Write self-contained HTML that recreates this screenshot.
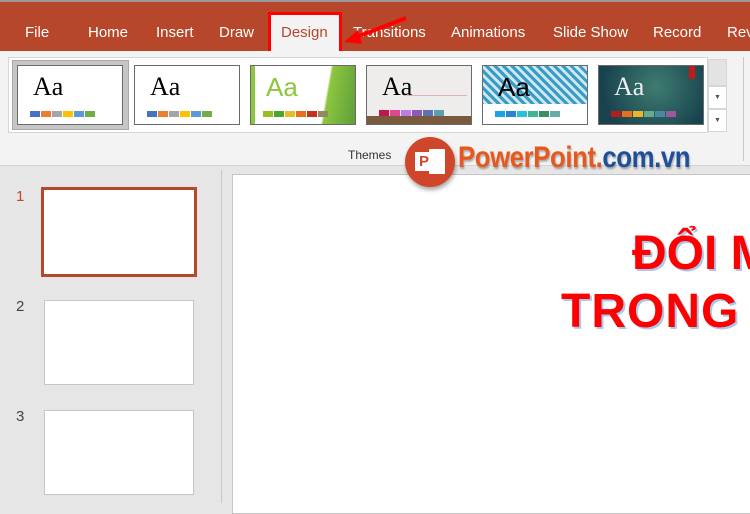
<!DOCTYPE html>
<html><head><meta charset="utf-8"><style>
*{margin:0;padding:0;box-sizing:border-box}
body{width:750px;height:503px;overflow:hidden;position:relative;background:#e6e6e6;font-family:"Liberation Sans",sans-serif}
.top{position:absolute;left:0;top:0;width:750px;height:51px;background:#b7472a;border-top:2px solid #9a9a9a}
.tab{position:absolute;top:24px;color:#fff;font-size:15px}
.rib{position:absolute;left:0;top:51px;width:750px;height:115px;background:#f3f3f3;border-bottom:1px solid #d4d4d4}
.gal{position:absolute;left:8px;top:57px;width:700px;height:76px;background:#fff;border:1px solid #d6d6d6}
.th{position:absolute;top:65px;width:106px;height:60px;border:1px solid #6a6a6a;background:#fff;overflow:hidden}
.th .aa{position:absolute;left:15px;top:6px;font-family:"Liberation Serif",serif;font-size:26px;color:#000}
.th .c{position:absolute;left:12px;top:45px;display:flex;gap:1px}
.th .c i{display:block;width:10px;height:6px}
.sb{position:absolute;left:708px;width:19px;background:#fff;border:1px solid #d6d6d6}
</style></head><body>
<div class="top"></div>
<div class="tab" style="left:25px;top:24px">File</div>
<div class="tab" style="left:88px">Home</div>
<div class="tab" style="left:156px">Insert</div>
<div class="tab" style="left:219px">Draw</div>
<div style="position:absolute;left:268px;top:12px;width:74px;height:43px;background:#f3f3f3;border:3px solid #f00"></div>
<div class="tab" style="left:281px;color:#b7472a">Design</div>
<div class="tab" style="left:353px">Transitions</div>
<div class="tab" style="left:451px">Animations</div>
<div class="tab" style="left:553px">Slide Show</div>
<div class="tab" style="left:653px">Record</div>
<div class="tab" style="left:727px">Rev</div>
<svg style="position:absolute;left:340px;top:12px" width="70" height="40"><line x1="66" y1="6" x2="14" y2="26" stroke="#f00" stroke-width="4"/><polygon points="4,30 18,18 22,32" fill="#f00"/></svg>
<div class="rib"></div>
<div class="gal"></div>
<div style="position:absolute;left:12px;top:60px;width:117px;height:70px;background:#c6c6c6;border:1px solid #a8a8a8"></div>
<div class="th" style="left:17px;width:106px"><span class="aa">Aa</span><div class="c"><i style="background:#4472c4"></i><i style="background:#ed7d31"></i><i style="background:#a5a5a5"></i><i style="background:#ffc000"></i><i style="background:#5b9bd5"></i><i style="background:#70ad47"></i></div></div>
<div class="th" style="left:134px"><span class="aa">Aa</span><div class="c"><i style="background:#4472c4"></i><i style="background:#ed7d31"></i><i style="background:#a5a5a5"></i><i style="background:#ffc000"></i><i style="background:#5b9bd5"></i><i style="background:#70ad47"></i></div></div>
<div class="th" style="left:250px;background:linear-gradient(100deg,#fff 70%,#8dc63f 72%,#5f9e3a 100%)"><div style="position:absolute;left:0;top:0;width:4px;height:60px;background:#8dc63f"></div><span class="aa" style="font-family:'Liberation Sans';color:#8dc63f">Aa</span><div class="c"><i style="background:#94c11f"></i><i style="background:#4ea72a"></i><i style="background:#e8bc28"></i><i style="background:#e86d1c"></i><i style="background:#c7301f"></i><i style="background:#958860"></i></div></div>
<div class="th" style="left:366px;background:#efecec"><span class="aa">Aa</span><div style="position:absolute;left:40px;top:29px;width:60px;height:1px;background:#e0b0c0"></div><div class="c" style="top:44px"><i style="background:#c0174a"></i><i style="background:#e04590"></i><i style="background:#c07ae8"></i><i style="background:#8a5bb8"></i><i style="background:#5d72b0"></i><i style="background:#5a9eb0"></i></div><div style="position:absolute;left:0;top:50px;width:106px;height:10px;background:#7a5a3c"></div></div>
<div class="th" style="left:482px;background:repeating-linear-gradient(45deg,#3a9cc4 0 3px,#cfe8f2 3px 6px)"><div style="position:absolute;left:0;top:38px;width:106px;height:22px;background:#fff"></div><span class="aa" style="font-family:'Liberation Sans'">Aa</span><div class="c"><i style="background:#1aa3e6"></i><i style="background:#2d82d2"></i><i style="background:#27c2d6"></i><i style="background:#3fb598"></i><i style="background:#3a8f66"></i><i style="background:#6aabaa"></i></div></div>
<div class="th" style="left:598px;background:radial-gradient(circle at 55% 35%,#3f7c70,#17424e 80%)"><span class="aa" style="color:#eee">Aa</span><div style="position:absolute;right:8px;top:0;width:6px;height:13px;background:#c01a1a"></div><div class="c"><i style="background:#b71c1c"></i><i style="background:#e8701a"></i><i style="background:#e8b828"></i><i style="background:#6aaa8a"></i><i style="background:#4a8aa0"></i><i style="background:#9a5aa0"></i></div></div>
<div class="sb" style="top:59px;height:27px;background:#e3e3e3"></div>
<div class="sb" style="top:86px;height:23px;font-size:7px;color:#555;text-align:center;line-height:21px">▼</div>
<div class="sb" style="top:109px;height:23px;font-size:7px;color:#555;text-align:center;line-height:22px">▼</div>
<div style="position:absolute;left:743px;top:57px;width:1px;height:104px;background:#c8c8c8"></div>
<div style="position:absolute;left:348px;top:148px;font-size:12px;color:#333">Themes</div>
<div style="position:absolute;left:221px;top:170px;width:1px;height:333px;background:#c8c8c8"></div>
<div style="position:absolute;left:16px;top:188px;font-size:15px;color:#c8452a">1</div>
<div style="position:absolute;left:41px;top:187px;width:156px;height:90px;background:#fff;border:3px solid #b7472a"></div>
<div style="position:absolute;left:16px;top:298px;font-size:15px;color:#444">2</div>
<div style="position:absolute;left:44px;top:300px;width:150px;height:85px;background:#fff;border:1px solid #c6c6c6"></div>
<div style="position:absolute;left:16px;top:408px;font-size:15px;color:#444">3</div>
<div style="position:absolute;left:44px;top:410px;width:150px;height:85px;background:#fff;border:1px solid #c6c6c6"></div>
<div style="position:absolute;left:232px;top:174px;width:530px;height:340px;background:#fff;border:1px solid #c6c6c6"></div>
<div style="position:absolute;left:632px;top:226px;font-size:48px;font-weight:bold;color:#f00;white-space:nowrap;text-shadow:2px 2px 0 #a8c8ee">ĐỔI M</div>
<div style="position:absolute;left:561px;top:284px;font-size:48px;font-weight:bold;letter-spacing:1px;color:#f00;white-space:nowrap;text-shadow:2px 2px 0 #a8c8ee">TRONG</div>
<div style="position:absolute;left:405px;top:137px;width:50px;height:50px;border-radius:50%;background:#d0462a;box-shadow:1px 3px 4px rgba(0,0,0,.35)"></div>
<div style="position:absolute;left:429px;top:149px;width:16px;height:25px;background:#fff;border-radius:1px"></div>
<div style="position:absolute;left:415px;top:152px;width:18px;height:19px;background:#fff;color:#d0462a;font-weight:bold;font-size:15px;text-align:center;line-height:19px">P</div>
<div style="position:absolute;left:458px;top:141px;font-size:30px;font-weight:bold;letter-spacing:-0.5px;transform:scaleX(0.86);transform-origin:left;white-space:nowrap;text-shadow:1px 2px 2px rgba(0,0,0,.3)"><span style="color:#e8581c">PowerPoint.</span><span style="color:#1f4f9a">com.vn</span></div>
</body></html>
